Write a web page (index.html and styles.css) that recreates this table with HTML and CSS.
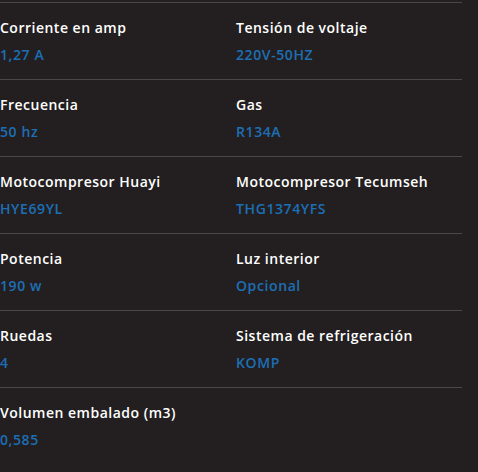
FILE: index.html
```html
<!DOCTYPE html>
<html lang="es">
<head>
<meta charset="utf-8">
<title>Especificaciones</title>
<link rel="stylesheet" href="styles.css">
</head>
<body>
<div class="specs">
  <div class="cell"><div class="label">Corriente en amp</div><div class="value">1,27 A</div></div>
  <div class="cell"><div class="label">Tensión de voltaje</div><div class="value">220V-50HZ</div></div>
  <div class="cell"><div class="label">Frecuencia</div><div class="value">50 hz</div></div>
  <div class="cell"><div class="label">Gas</div><div class="value">R134A</div></div>
  <div class="cell"><div class="label">Motocompresor Huayi</div><div class="value">HYE69YL</div></div>
  <div class="cell"><div class="label">Motocompresor Tecumseh</div><div class="value">THG1374YFS</div></div>
  <div class="cell"><div class="label">Potencia</div><div class="value">190 w</div></div>
  <div class="cell"><div class="label">Luz interior</div><div class="value">Opcional</div></div>
  <div class="cell"><div class="label">Ruedas</div><div class="value">4</div></div>
  <div class="cell"><div class="label">Sistema de refrigeración</div><div class="value">KOMP</div></div>
  <div class="cell"><div class="label">Volumen embalado (m3)</div><div class="value">0,585</div></div>
  <div class="cell"></div>
</div>
</body>
</html>
```
FILE: styles.css
```css
html, body {
  margin: 0;
  background: #231f20;
}
body {
  padding-top: 2px;
  font-family: "Open Sans", "DejaVu Sans", sans-serif;
}
.specs {
  width: 462px;
  display: grid;
  grid-template-columns: 236px 226px;
}
.cell {
  border-top: 1px solid #4b4748;
  padding-top: 15px;
  height: 61px;
  display: flex;
  flex-direction: column;
  gap: 7px;
}
.label {
  color: #ffffff;
  font-size: 14px;
  font-weight: 600;
  line-height: 20px;
  letter-spacing: 0.5px;
}
.value {
  color: #1c6fb6;
  font-size: 14px;
  font-weight: 600;
  line-height: 20px;
  letter-spacing: 0.6px;
}
```
